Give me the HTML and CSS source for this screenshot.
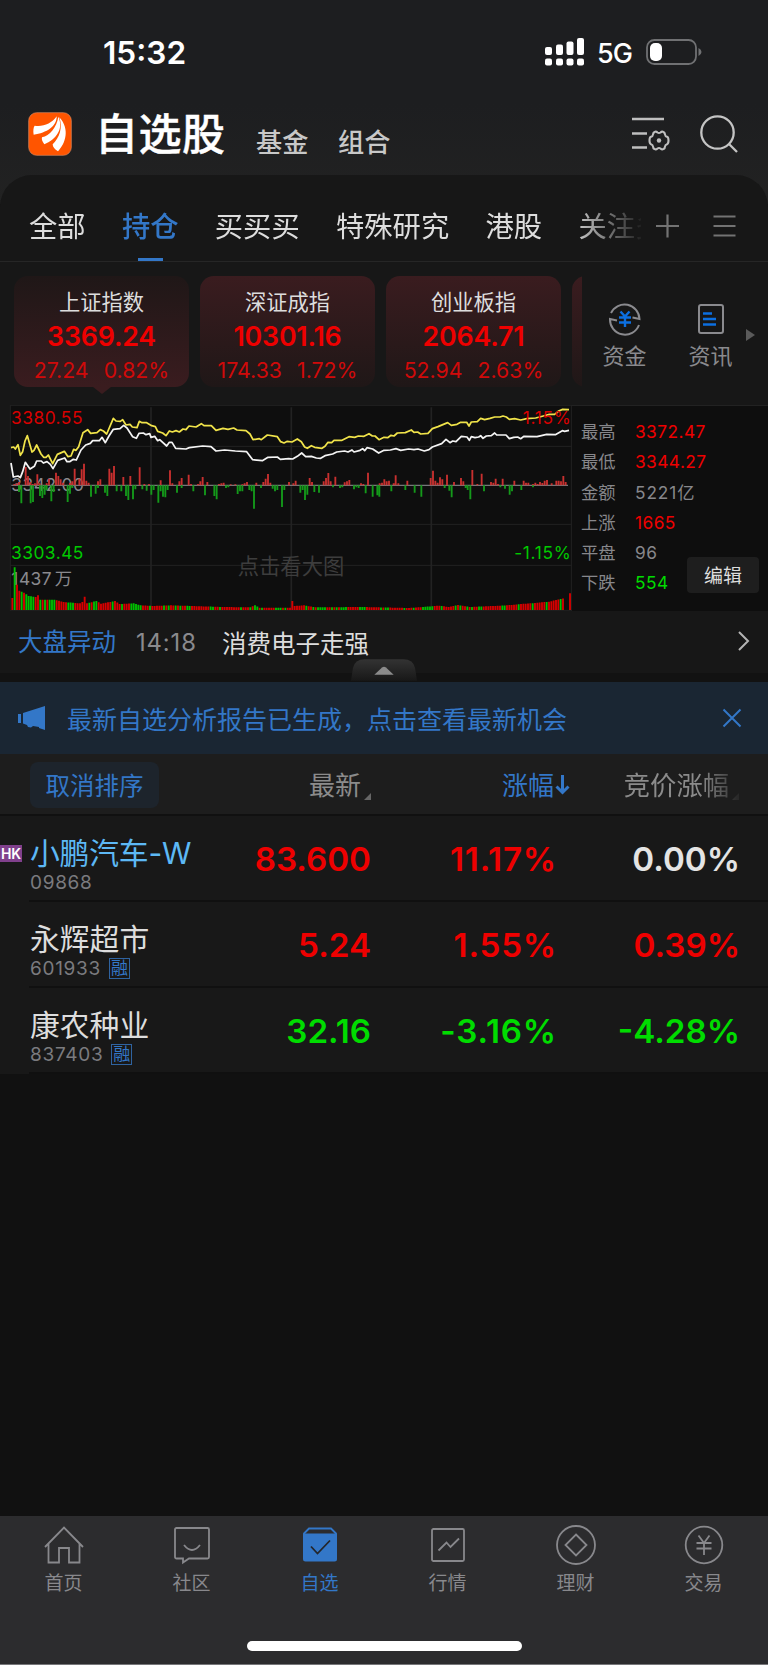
FILE: index.html
```
<!DOCTYPE html>
<html lang="zh-CN">
<head>
    <meta charset="UTF-8">
    <meta name="viewport" content="width=device-width, initial-scale=1.0">
    <title>自选股</title>
    <link rel="stylesheet" href="styles.css">
</head>
<body>
    <div class="status-bar">
        <span class="time">15:32</span>
        <svg class="signal" width="40" height="28" viewBox="0 0 40 28" fill="#fff">
            <rect x="0" y="9" width="7" height="8" rx="2"/><rect x="11" y="6.500" width="7" height="10.500" rx="2"/>
            <rect x="21.500" y="3.500" width="7" height="13.500" rx="2"/><rect x="32" y="0" width="7" height="17" rx="2"/>
            <rect x="0" y="20.500" width="7" height="7" rx="2"/><rect x="11" y="20.500" width="7" height="7" rx="2"/>
            <rect x="21.500" y="20.500" width="7" height="7" rx="2"/><rect x="32" y="20.500" width="7" height="7" rx="2"/>
        </svg>
        <span class="network">5G</span>
        <svg class="battery" width="56" height="26" viewBox="0 0 56 26">
            <rect x="1" y="1" width="49" height="24" rx="7.500" fill="none" stroke="#707173" stroke-width="1.800"/>
            <rect x="4" y="4" width="12" height="18" rx="5" fill="#fff"/>
            <path d="M52.500 9v8q3-1.500 3-4t-3-4z" fill="#707173"/>
        </svg>
    </div>

    <div class="header">
        <svg class="logo" width="44" height="44" viewBox="0 0 132 132">
            <rect x="2" y="2" width="128" height="128" rx="24" fill="#ff5500" stroke="#d98a60" stroke-width="2"/>
            <g fill="#fff">
                <path d="M17 68C15 56 16 46 20 41C45 45 71 35 86 13C87 43 56 63 17 68z"/>
                <path d="M49 97C43 89 40 81 42 76C65 70 86 47 91 14C108 52 84 81 49 97z"/>
                <path d="M90 118C80 112 74 105 74 97C94 78 105 48 94 16C127 52 112 95 90 118z"/>
            </g>
        </svg>
        <h1>自选股</h1>
        <a>基金</a>
        <a>组合</a>
        <svg class="list-setting" width="40" height="36" viewBox="0 0 40 36" fill="none" stroke="#bfbfbf" stroke-width="2.600">
            <path d="M1 3h32M1 17.500h15M1 31.500h15"/>
            <path d="M23.500 16q1.500-1 3 .5q1.500 1 3 0q1.500-1.500 3-.5q1.500.8 1.500 2.500q.2 1.800 2 2.300q1.500.6 1.500 3.700t-1.500 3.700q-1.800.5-2 2.300q0 1.700-1.500 2.500q-1.500 1-3-.5q-1.500-1-3 0q-1.500 1.500-3 .5q-1.500-.8-1.500-2.500q-.2-1.800-2-2.300q-1.500-.6-1.500-3.700t1.500-3.700q1.800-.5 2-2.300q0-1.700 1.500-2.500z" stroke-width="2.100"/>
            <circle cx="28" cy="24.500" r="2.200" fill="#bfbfbf" stroke="none"/>
        </svg>
        <svg class="search" width="38" height="38" viewBox="0 0 38 38" fill="none" stroke="#c4c4c4" stroke-width="2.300">
            <circle cx="17.500" cy="17.500" r="16.200"/><path d="M29 29l8 8"/>
        </svg>
    </div>

    <div class="panel">
        <div class="tabs">
            <div class="tab-list">
                <span>全部</span><span class="active">持仓</span><span>买买买</span><span>特殊研究</span><span>港股</span><span>关注多</span>
            </div>
            <svg class="tab-tools" width="84" height="26" viewBox="0 0 84 26" fill="none" stroke="#737373" stroke-width="2.200">
                <path d="M1 13h23M12.500 1.500v23M58.500 3.500h22M58.500 13h22M58.500 22.500h22"/>
            </svg>
        </div>

        <div class="indices">
            <div class="cards">
                <div class="card selected"><h4>上证指数</h4><b>3369.24</b><p><i>27.24</i><i>0.82%</i></p></div>
                <div class="card"><h4>深证成指</h4><b>10301.16</b><p><i>174.33</i><i>1.72%</i></p></div>
                <div class="card"><h4>创业板指</h4><b>2064.71</b><p><i>52.94</i><i>2.63%</i></p></div>
                <div class="card"></div>
            </div>
            <div class="quick">
                <svg width="34" height="34" viewBox="0 0 34 34" fill="none" stroke="#8a8a8e" stroke-width="2">
                    <path d="M3 11A15 15 0 0 1 31.500 17l-7-1.500M31 23A15 15 0 0 1 2 17l7 1.500"/>
                    <path d="M12.500 9.500l4.500 5 4.500-5M11 15.500h12M11 20.500h12M17 14v11" stroke="#0c6fe0" stroke-width="2.400"/>
                </svg>
                <span>资金</span>
            </div>
            <div class="quick">
                <svg width="34" height="34" viewBox="0 0 34 34" fill="none" stroke="#8a8a8e" stroke-width="2">
                    <rect x="5" y="3" width="24" height="28" rx="2"/>
                    <path d="M9 11.500h9M9 17h13M9 22.500h13" stroke="#0c6fe0" stroke-width="2.300"/>
                </svg>
                <span>资讯</span>
            </div>
            <svg class="more" width="9" height="12" viewBox="0 0 9 12"><path d="M0 0l9 6-9 6z" fill="#5a5a5a"/></svg>
        </div>

        <div class="market">
            <svg class="chart" width="572" height="206" viewBox="0 30 1716 618">
                <rect x="31" y="30" width="1686" height="618" fill="#0e0e0e"/>
                <g class="grid">
                    <path d="M31 31H1716M31 154H1714M31 388H1714M31 511H1714M31 646H1716M31 30V648M1714 30V648"/>
                    <path d="M453 37V646M874 37V646M1294 37V646" stroke-width="5"/>
                </g>
                <text class="watermark" x="713" y="537">点击看大图</text>
                <text class="gray" x="34" y="289">3342.00</text>
                <text class="gray" x="34" y="569">1437<tspan dx="8">万</tspan></text>
                <path id="volUp" class="bar" stroke="#d80000"/>
                <path id="volDown" class="bar" stroke="#00c000"/>
                <path d="M34 271H1704" stroke="#77777a" stroke-width="4"/>
                <path id="up" class="bar" stroke="#c8302f"/>
                <path id="down" class="bar" stroke="#149a1a"/>
                <polyline class="line" stroke="#f0e34a" points="33,158 41,156 46,162 54,149 61,181 68,170 75,138 82,122 96,171 102,166 110,150 123,177 131,187 138,187 145,180 158,206 172,178 193,169 204,185 213,183 221,163 228,166 236,155 249,113 263,104 272,115 291,113 301,104 310,108 320,117 340,70 348,78 361,79 368,74 378,90 390,88 397,96 411,98 418,79 426,83 440,83 455,92 466,95 473,109 488,114 498,122 508,108 517,111 528,107 538,111 549,102 558,104 567,93 588,96 604,86 612,92 634,92 648,106 669,100 684,103 701,99 711,105 738,107 750,117 759,134 778,131 784,134 802,120 832,125 842,140 852,144 862,139 876,141 892,132 904,140 914,156 922,160 934,152 944,157 966,160 975,154 984,142 995,143 1002,136 1026,136 1047,125 1064,127 1075,123 1092,124 1107,116 1117,123 1125,123 1137,134 1152,127 1163,128 1173,121 1182,123 1192,114 1216,113 1234,105 1242,112 1253,111 1262,117 1284,115 1297,101 1314,95 1343,83 1354,91 1371,88 1382,82 1400,82 1407,93 1414,81 1432,80 1442,70 1454,74 1470,70 1484,66 1500,66 1509,63 1519,66 1528,73 1544,71 1562,75 1580,71 1607,69 1630,63 1648,58 1664,58 1676,48 1688,43 1707,44"/>
                <polyline class="line" stroke="#f4f4f4" points="33,204 40,246 54,243 61,248 68,230 76,202 90,222 103,214 110,198 124,198 130,204 141,200 151,208 159,221 173,196 194,189 201,200 209,200 220,193 229,195 243,165 257,150 271,145 278,137 298,137 306,127 316,143 327,123 340,103 360,101 371,91 381,99 398,125 409,130 417,115 430,114 438,119 449,116 453,127 464,124 473,137 479,134 500,153 508,142 516,142 527,160 558,162 568,158 608,153 633,155 648,168 674,165 706,168 740,170 758,194 787,197 804,187 832,186 841,193 866,191 878,192 892,184 905,174 917,185 934,184 949,189 962,190 975,182 998,177 1010,171 1034,168 1044,171 1056,165 1062,171 1080,166 1088,161 1094,167 1101,158 1118,162 1136,174 1152,166 1171,165 1188,161 1202,166 1226,162 1242,164 1254,162 1273,168 1287,164 1297,156 1325,146 1338,133 1350,143 1358,138 1368,140 1384,124 1401,126 1408,136 1414,125 1425,128 1436,126 1442,122 1449,130 1459,123 1474,122 1484,114 1490,120 1518,120 1528,131 1541,127 1553,126 1562,131 1572,124 1611,125 1640,118 1666,119 1687,107 1694,109 1707,106"/>
                <text class="red" x="33" y="86">3380.55</text>
                <text class="green" x="33" y="492">3303.45</text>
                <text class="red end" x="1714" y="86">1.15%</text>
                <text class="green end" x="1714" y="492">-1.15%</text>
            </svg>
            <div class="stats">
                <div><span>最高</span><em class="red">3372.47</em></div>
                <div><span>最低</span><em class="red">3344.27</em></div>
                <div><span>金额</span><em class="amount">5221亿</em></div>
                <div><span>上涨</span><em class="red">1665</em></div>
                <div><span>平盘</span><em>96</em></div>
                <div><span>下跌</span><em class="green">554</em></div>
                <button class="edit">编辑</button>
            </div>
        </div>

        <div class="news">
            <span class="tag">大盘异动</span>
            <span class="clock">14:18</span>
            <span class="headline">消费电子走强</span>
            <svg width="12" height="20" viewBox="0 0 12 20" fill="none" stroke="#b4b4b4" stroke-width="2"><path d="M1 1l9 9-9 9"/></svg>
        </div>
        <div class="fold">
            <svg width="66" height="22" viewBox="0 0 68 22">
                <defs><linearGradient id="foldBg" x1="0" y1="0" x2="0" y2="1"><stop offset="0" stop-color="#333"/><stop offset="1" stop-color="#181818"/></linearGradient></defs>
                <path d="M0 22L2 9Q4 0 14 0H54Q64 0 66 9L68 22z" fill="url(#foldBg)"/>
                <path d="M24 16l8-7.500q2-1.500 4 0l8 7.500z" fill="#8b8b8b"/>
            </svg>
        </div>
    </div>

    <div class="banner">
        <svg width="28" height="24" viewBox="0 0 28 24" fill="#3377c8"><path d="M0 8h3v9H0zM5 7L27 0v24l-6-2v-1l-6-1-2 1.500-3-.5-1-2-4-1.500z"/></svg>
        <p>最新自选分析报告已生成，点击查看最新机会</p>
        <svg width="20" height="20" viewBox="0 0 20 20" fill="none" stroke="#3377c8" stroke-width="2"><path d="M1.500 1.500l17 17M18.500 1.500l-17 17"/></svg>
    </div>

    <div class="row row-head">
        <div class="first"><button class="cancel">取消排序</button></div>
        <div class="col">最新<svg width="7" height="7"><path d="M7 0v7H0z" fill="#666"/></svg></div>
        <div class="col sorted">涨幅<svg width="15" height="22" viewBox="0 0 15 22" fill="none" stroke="#3377c8" stroke-width="3"><path d="M7.500 1v17M1.500 12.500l6 6 6-6"/></svg></div>
        <div class="col last">竞价涨幅<svg width="7" height="7"><path d="M7 0v7H0z" fill="#666"/></svg></div>
    </div>

    <div class="stocks">
        <div class="row hk">
            <div class="first"><h3><i class="mark">HK</i>小鹏汽车-W</h3><p>09868</p></div>
            <div class="col red">83.600</div><div class="col red">11.17%</div><div class="col white">0.00%</div>
        </div>
        <div class="row">
            <div class="first"><h3>永辉超市</h3><p>601933<i class="rong">融</i></p></div>
            <div class="col red">5.24</div><div class="col red">1.55%</div><div class="col red">0.39%</div>
        </div>
        <div class="row">
            <div class="first"><h3>康农种业</h3><p>837403<i class="rong">融</i></p></div>
            <div class="col green">32.16</div><div class="col green">-3.16%</div><div class="col green">-4.28%</div>
        </div>
    </div>

    <div class="tabbar">
        <div class="nav">
            <a><svg viewBox="0 0 42 42"><path d="M2 23L21 3.500 40 23M5.500 20v18.500H16V24h10v14.500h10.500V20"/></svg>首页</a>
            <a><svg viewBox="0 0 42 42"><path d="M5.500 4h31a1.500 1.500 0 0 1 1.500 1.500v27.500a1.500 1.500 0 0 1-1.500 1.500H18l-6 4v-4H5.500A1.500 1.500 0 0 1 4 33V5.500A1.500 1.500 0 0 1 5.500 4zM13 21q8 10 16 0"/></svg>社区</a>
            <a class="active"><svg viewBox="0 0 42 42"><path d="M4 9.500h34V35a2.500 2.500 0 0 1-2.500 2.500h-29A2.500 2.500 0 0 1 4 35z" fill="#3377c8" stroke="none"/><path d="M4.500 10L10 4.500h22L37.500 10"/><path d="M12 22.500l6.500 7L31 16.500" stroke="#24262b"/></svg>自选</a>
            <a><svg viewBox="0 0 42 42"><rect x="5" y="5" width="32" height="32" rx="1.500"/><path d="M11.500 26.500l8-8 4 4.500 8.500-8.500"/></svg>行情</a>
            <a><svg viewBox="0 0 42 42"><circle cx="21" cy="21" r="19"/><path d="M21 10.500L31.500 21 21 31.500 10.500 21z"/></svg>理财</a>
            <a><svg viewBox="0 0 42 42"><circle cx="21" cy="21" r="18.300"/><path d="M15.500 11.500L21 19l5.500-7.500M13.500 19h15M13.500 24.500h15M21 19v12"/></svg>交易</a>
        </div>
        <div class="home-bar"></div>
    </div>

    <script>
        // x position, height pairs for the bars above and below the zero line
        const up = [43,4,50,6,57,10,77,55,84,28,91,10,98,4,105,6,112,33,119,6,140,6,147,20,168,38,175,28,182,18,189,8,210,8,217,12,224,50,238,20,245,48,252,65,259,14,266,8,294,12,301,18,328,50,335,38,342,58,370,25,391,28,419,54,433,4,447,4,482,15,510,45,517,6,538,12,545,22,566,32,573,4,594,4,601,12,608,25,622,10,657,4,664,6,671,8,692,3,706,3,727,3,734,6,741,10,769,8,790,10,797,20,804,34,811,8,867,10,
            880,6,887,14,929,22,936,10,971,12,978,22,985,37,992,12,1006,26,1034,9,1041,12,1048,16,1083,6,1090,4,1104,38,1139,6,1146,8,1153,18,1160,12,1167,14,1181,6,1187,30,1195,6,1222,14,1292,22,1299,44,1306,14,1313,8,1320,24,1327,18,1341,32,1362,10,1383,22,1390,12,1417,46,1432,4,1445,35,1473,10,1480,8,1487,20,1494,4,1508,20,1543,14,1571,14,1578,8,1585,8,1599,4,1606,8,1613,4,1620,10,1627,7,1634,14,1641,16,1655,6,1669,14,1676,14,1683,12,1690,28,1697,10];
        const down = [57,20,64,54,92,54,99,50,120,32,127,38,134,28,140,15,154,48,161,20,203,50,210,25,217,8,273,34,287,25,294,8,315,22,322,32,350,18,364,18,378,32,385,44,399,42,406,12,427,12,440,16,454,28,461,14,475,52,482,18,489,34,496,36,503,14,531,22,545,8,580,18,615,30,643,32,650,42,678,8,685,6,713,26,720,18,727,18,748,14,755,18,762,70,783,8,818,10,825,18,832,14,846,65,853,14,
            901,22,908,14,915,44,922,28,943,20,957,22,999,6,1020,8,1027,6,1062,12,1069,6,1076,8,1097,24,1118,34,1132,30,1138,34,1174,18,1216,14,1244,22,1264,34,1334,8,1348,16,1355,36,1397,8,1403,14,1411,42,1452,18,1501,6,1515,10,1529,28,1536,18,1564,14,1599,6];
        function bars(id, list, dir) {
            let d = '';
            for (let i = 0; i < list.length; i += 2) d += 'M' + list[i] + ' 271v' + dir * list[i + 1];
            document.getElementById(id).setAttribute('d', d);
        }
        bars('up', up, -1);
        bars('down', down, 1);

        // volume: heights between these points are interpolated
        const keys = [[0,36],[1,128],[2,76],[3,58],[5,52],[7,42],[10,39],[11,44],[12,31],[18,31],[22,24],[29,20],[30,24],[31,40],[32,20],[36,27],[38,19],[44,27],[46,18],[52,20],[55,14],[60,12],[68,14],[90,9],[102,8],[104,14],[106,7],[119,7],[120,27],[121,12],[125,14],[130,8],[150,9],[170,6],[176,9],[183,13],[187,9],[191,15],[196,9],[206,12],[212,14],[218,18],[222,20],[230,25],[235,33]];
        const tone = 'rgrrgrggggrrgrgrgggrrrrrgggrrrrrrgrggrrrrrrgrrrgrrrgggggrrrgrrrrrgrgrrgrgrrggrrrrrrrrggrrgrrrrrrrrgrrrgrggrgrrrrrgggrgrrrrrrr'.repeat(2);
        const path = { r: '', g: '' };
        for (let i = 0, k = 0; i < 237; i++) {
            while (k < keys.length - 2 && i > keys[k + 1][0]) k++;
            const [a, b] = [keys[k], keys[k + 1]];
            const h = a[1] + (b[1] - a[1]) * (i - a[0]) / (b[0] - a[0]);
            path[i > 210 ? (i % 6 === 1 ? 'g' : 'r') : tone[i]] += 'M' + (37 + i * 7) + ' 645v' + -h;
        }
        path.r += 'M1710 645v-50';
        document.getElementById('volUp').setAttribute('d', path.r);
        document.getElementById('volDown').setAttribute('d', path.g);
    </script>
</body>
</html>
```
FILE: styles.css
```
* {
    box-sizing: border-box;
}
body {
    margin: 0;
    width: 768px;
    height: 1665px;
    display: flex;
    flex-direction: column;
    overflow: hidden;
    background: #111;
    color: #ddd;
    font-family: Inter, "Noto Sans CJK SC", sans-serif;
}
h1, h3, h4, p {
    margin: 0;
    font-weight: 400;
}
i, em {
    font-style: normal;
}
svg {
    display: block;
    flex: none;
}
button {
    border: 0;
    padding: 0;
    font-family: inherit;
}
.red { color: #ee0000; fill: #d80000; }
.green { color: #00dc00; fill: #00c800; }
.white { color: #e4e4e4; }

/* Status bar */
.status-bar {
    height: 104px;
    flex: none;
    display: flex;
    align-items: center;
    padding-left: 103px;
    background: #1d1e20;
    color: #fff;
}
.time {
    width: 442px;
    padding-top: 1px;
    font-size: 31.6px;
    font-weight: 600;
}
.network {
    width: 61px;
    padding: 2px 0 0 12px;
    font-size: 27px;
    font-weight: 500;
    letter-spacing: -1px;
}

/* Header */
.header {
    height: 100px;
    flex: none;
    display: flex;
    padding: 8px 0 0 28px;
    background: linear-gradient(#1d1e20, #222);
}
.header h1 {
    margin-left: 23px;
    width: 161px;
    font-size: 43px;
    line-height: 44px;
    font-weight: 500;
    letter-spacing: .5px;
    color: #fff;
    -webkit-text-stroke: .4px #fff;
}
.header a {
    width: 82px;
    font-size: 26.2px;
    line-height: 61px;
    font-weight: 500;
    color: #c8c8c8;
}
.list-setting { margin: 4px 0 0 211px; }
.search { margin: 3px 0 0 29px; }

/* Main panel */
.panel {
    margin-top: -29px;
    height: 507px;
    flex: none;
    background: #171717;
    border-radius: 32px 32px 0 0;
}
.tabs {
    height: 87px;
    display: flex;
    padding-left: 29px;
    border-bottom: 1px solid #262626;
}
.tab-list {
    width: 612px;
    display: flex;
    gap: 36.3px;
    overflow: hidden;
    white-space: nowrap;
    font-size: 28.3px;
    line-height: 104px;
    -webkit-mask-image: linear-gradient(90deg, #000 540px, transparent 616px);
}
.tab-list .active {
    height: 87px;
    font-weight: 500;
    color: #3377c8;
    background: linear-gradient(#3377c8, #3377c8) 16px 83px / 25px 3px no-repeat;
}
.tab-tools { margin: 38px 0 0 14px; }

.indices {
    height: 143px;
    display: flex;
    padding: 14px 0 0 14px;
}
.cards {
    width: 568px;
    display: flex;
    gap: 11px;
    overflow: hidden;
}
.card {
    width: 175px;
    height: 111px;
    flex: none;
    border-radius: 14px;
    background: linear-gradient(#3a1c1f, #1f1717);
    text-align: center;
    color: #ee0000;
}
.card.selected {
    background: linear-gradient(#1f1717, #3a1c1f);
}
.card.selected::after {
    content: "";
    display: block;
    margin: 0 auto;
    border: 9px solid transparent;
    border-top: 7px solid #3a1c1f;
    width: 0;
}
.card h4 {
    padding-top: 10px;
    font-size: 21.3px;
    line-height: 32px;
    color: #ddd;
}
.card b {
    display: block;
    height: 35px;
    font-size: 26.8px;
    line-height: 37px;
    font-weight: 600;
    letter-spacing: -.2px;
}
.card p {
    display: flex;
    justify-content: center;
    gap: 15px;
    height: 34px;
    font-size: 21.3px;
    line-height: 35px;
    color: #d00a0a;
}
.quick {
    width: 86px;
    padding-top: 26px;
    display: flex;
    flex-direction: column;
    align-items: center;
    font-size: 22px;
    line-height: 40px;
    color: #8a8a8e;
}
.quick svg, .quick span { margin-left: -1px; }
.more { margin: 53px 0 0 -8px; }

.market {
    height: 206px;
    display: flex;
    background: linear-gradient(90deg, #171717 11px, #0e0e0e 11px);
}
.grid { fill: none; stroke: #222; stroke-width: 3; }
.bar { fill: none; stroke-width: 5.6; }
.line { fill: none; stroke-width: 5.2; stroke-linejoin: round; }
.chart text { font-size: 52px; letter-spacing: 1.5px; }
.chart .gray { fill: #8a8a8e; }
.chart .end { text-anchor: end; letter-spacing: 2px; }
.chart .watermark { font-size: 64px; letter-spacing: 0; fill: #3d3d3d; }

.stats {
    position: relative;
    flex: 1;
    padding: 11px 0 0 9px;
    border-top: 1px solid #222;
    font-size: 17.3px;
    line-height: 30.3px;
    color: #87878b;
}
.stats div { display: flex; height: 30.3px; }
.stats span { width: 54px; }
.stats em { letter-spacing: .45px; }
.stats .amount { letter-spacing: .9px; }
.edit {
    position: absolute;
    right: 9px;
    bottom: 18px;
    width: 72px;
    height: 36px;
    padding-bottom: 2px;
    border-radius: 4px;
    background: #1e1e1e;
    color: #ddd;
    font-size: 19px;
}

.news {
    height: 62px;
    display: flex;
    padding-left: 18px;
    font-size: 24.5px;
    line-height: 63px;
}
.tag { width: 118px; color: #3377c8; }
.clock { width: 86px; font-size: 23.8px; letter-spacing: .9px; color: #8a8a8e; }
.headline { width: 516px; line-height: 66px; }
.news svg { margin-top: 20px; }
.fold {
    height: 9px;
    background: #121212;
}
.fold svg { position: relative; top: -14px; margin: 0 auto; }

/* Notice */
.banner {
    height: 72px;
    flex: none;
    display: flex;
    align-items: center;
    padding-left: 18px;
    background: #1a2633;
    color: #3377c8;
    font-size: 25px;
}
.banner p { width: 655px; margin-left: 21px; padding-bottom: 1px; }

/* Stock list */
.row {
    height: 86px;
    display: flex;
    margin-left: 29px;
    border-bottom: 2px solid #101010;
}
.first { width: 160px; }
.col {
    flex: none;
    width: 182px;
    text-align: right;
    font-size: 33.2px;
    line-height: 87px;
    font-weight: 600;
}
.row-head {
    height: 62px;
    flex: none;
    margin-left: 0;
    padding-left: 30px;
    background: #1d1d1d;
}
.row-head .first { width: 129px; padding-top: 8px; }
.row-head .col {
    display: flex;
    justify-content: flex-end;
    width: 199px;
    font-size: 26px;
    line-height: 63px;
    font-weight: 400;
    color: #8b8b8b;
}
.row-head .first + .col { width: 212px; }
.row-head .col svg { margin: 39px 0 0 3px; }
.row-head .col.sorted { color: #3377c8; }
.row-head .col.sorted svg { margin: 20px 0 0 1px; }
.row-head .col.last {
    width: 169px;
    font-size: 26.3px;
    -webkit-mask-image: linear-gradient(90deg, #000 130px, transparent 176px);
}
.cancel {
    width: 129px;
    height: 46px;
    padding-bottom: 2px;
    border-radius: 8px;
    background: #1d242c;
    color: #3377c8;
    font-size: 24.5px;
}
.stocks {
    height: 258px;
    flex: none;
    background: #181818;
}
.stocks .first { width: 220px; padding-left: 1px; }
.stocks .first + .col { width: 122px; }
.stocks .col:nth-child(3) { width: 186px; letter-spacing: .8px; }
.stocks .col:nth-child(4) { width: 183px; }
.first h3 {
    position: relative;
    padding-top: 16px;
    font-size: 29.8px;
    line-height: 42px;
    white-space: nowrap;
}
.hk h3 { color: #5db8f5; letter-spacing: -.2px; }
.mark {
    position: absolute;
    left: -30px;
    top: 29px;
    width: 22px;
    height: 17px;
    background: #80408c;
    color: #fff;
    font-size: 14px;
    line-height: 17px;
    font-weight: 600;
    text-align: center;
}
.stocks .first p {
    display: flex;
    align-items: center;
    height: 16px;
    font-size: 19px;
    letter-spacing: .7px;
    color: #7b7b7f;
}
.rong {
    margin-left: 8px;
    width: 21px;
    height: 21px;
    flex: none;
    border: 1px solid #2f63a0;
    font-size: 17px;
    line-height: 18px;
    letter-spacing: 0;
    text-align: center;
    color: #3377c8;
}

/* Bottom navigation */
.tabbar {
    margin-top: auto;
    height: 149px;
    flex: none;
    background: #2c2c2e;
    border-bottom: 1px solid #77777a;
}
.nav {
    height: 125px;
    display: flex;
    padding-top: 8px;
}
.nav a {
    width: 128px;
    display: flex;
    flex-direction: column;
    align-items: center;
    font-size: 19px;
    line-height: 35px;
    color: #88888c;
    text-indent: -1px;
}
.nav svg {
    width: 42px;
    height: 42px;
    fill: none;
    stroke: #88888c;
    stroke-width: 1.8;
}
.nav .active { color: #3377c8; }
.nav .active svg { stroke: #3377c8; }
.home-bar {
    width: 275px;
    height: 10px;
    margin: 0 auto;
    border-radius: 5px;
    background: #fff;
}
```
